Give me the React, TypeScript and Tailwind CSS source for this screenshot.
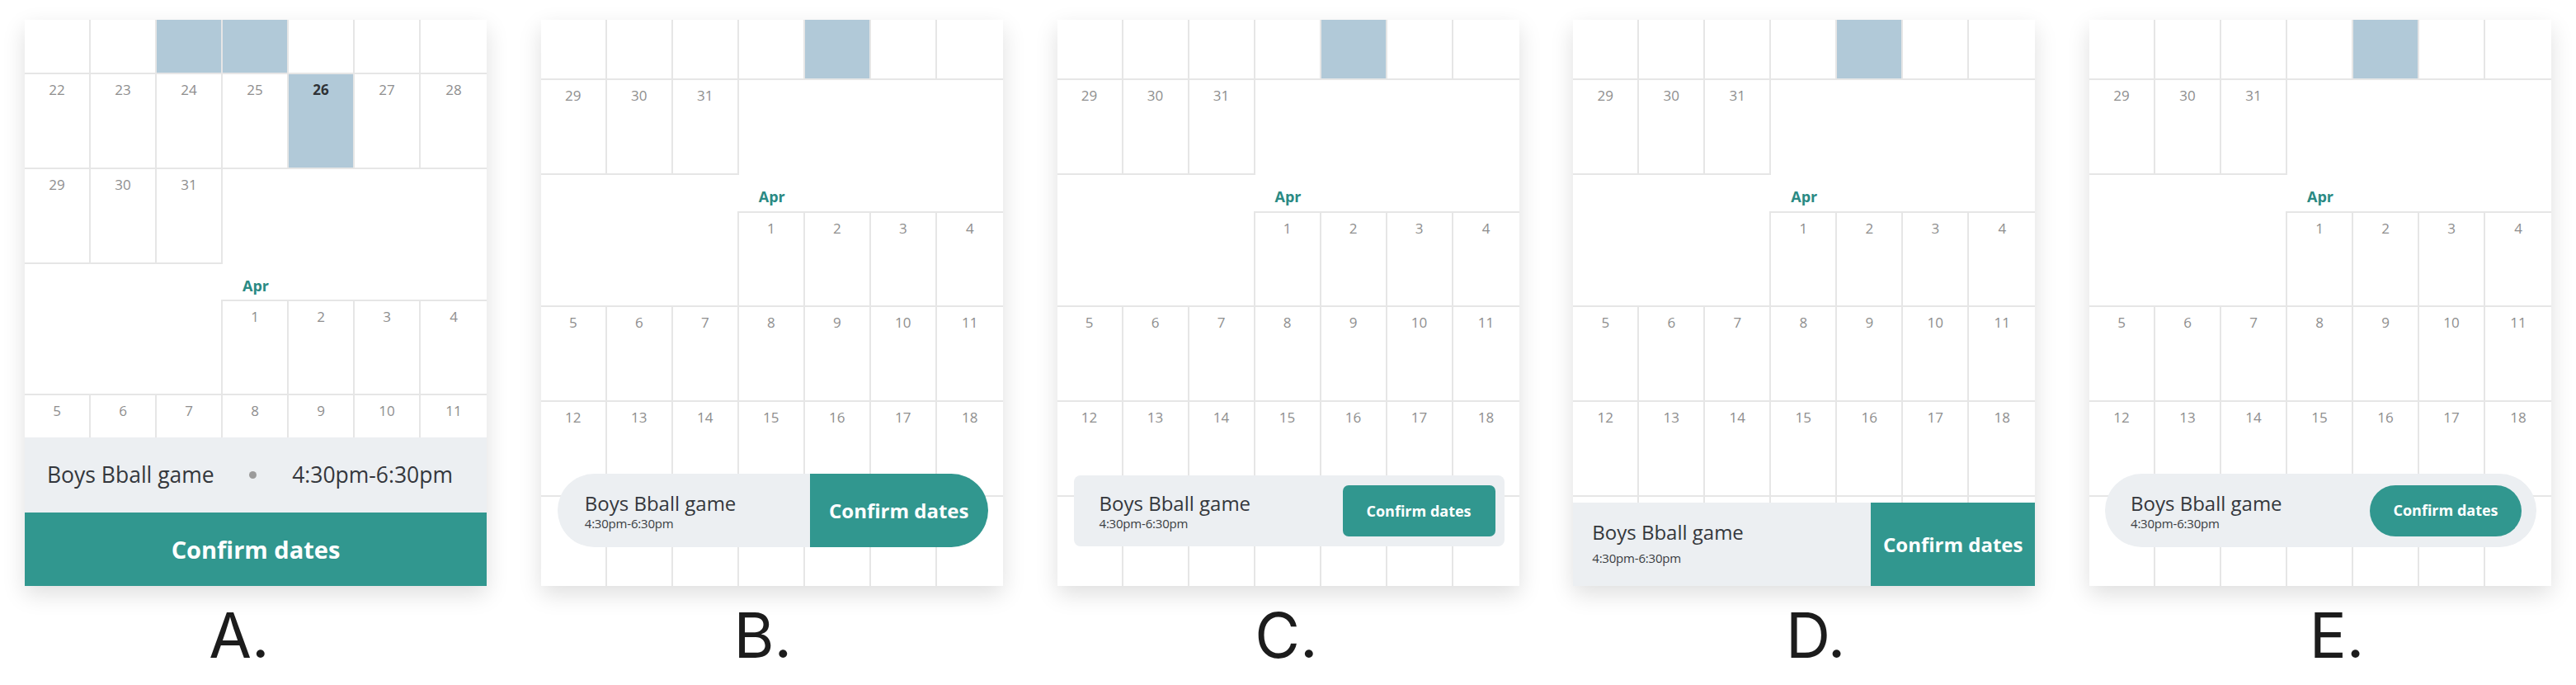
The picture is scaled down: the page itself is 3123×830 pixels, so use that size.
import React from "react";

type Spec = {
  n?: string | number;
  hl?: boolean;
  bold?: boolean;
  r?: boolean;
  b?: boolean;
  t?: boolean;
};

function Cell({ s }: { s: Spec }) {
  const cls = [
    "relative text-center pt-[8px] text-[17px] leading-[22px] border-[#e6e6e6]",
    s.r ? "border-r-2" : "",
    s.b ? "border-b-2" : "",
    s.t ? "border-t-2" : "",
    s.hl ? "bg-[#b1c9d8]" : "",
    s.bold ? "font-bold text-[#2f3236]" : "text-[#8e8e8e]",
  ].join(" ");
  return <div className={cls}>{s.n}</div>;
}

function Row({ h, cells }: { h: number; cells: Spec[] }) {
  return (
    <div className="grid grid-cols-7 shrink-0" style={{ height: h }}>
      {cells.map((c, i) => (
        <Cell key={i} s={c} />
      ))}
    </div>
  );
}

const full = (nums: (number | string | undefined)[], hl: number[] = [], bold: number[] = []): Spec[] =>
  nums.map((n, i) => ({ n, r: i < 6, b: true, hl: hl.includes(i), bold: bold.includes(i) }));

const lastMarch: Spec[] = [
  { n: 29, r: true, b: true },
  { n: 30, r: true, b: true },
  { n: 31, r: true, b: true },
  {},
  {},
  {},
  {},
];

const aprFirst: Spec[] = [
  { b: true },
  { b: true },
  { b: true, r: true },
  { n: 1, t: true, r: true, b: true },
  { n: 2, t: true, r: true, b: true },
  { n: 3, t: true, r: true, b: true },
  { n: 4, t: true, b: true },
];

function AprLabel({ h }: { h: number }) {
  return (
    <div className="grid grid-cols-7 shrink-0" style={{ height: h }}>
      <div />
      <div />
      <div />
      <div className="text-center pt-[14px] leading-[24px] text-[18px] font-bold text-[#2a8a84]">Apr</div>
    </div>
  );
}

const blank = [undefined, undefined, undefined, undefined, undefined, undefined, undefined];

function Panel({ children }: { children: React.ReactNode }) {
  return <div className="flex flex-col items-center">{children}</div>;
}

function Card({ children, overlay }: { children: React.ReactNode; overlay: React.ReactNode }) {
  return (
    <div className="relative w-[560px] h-[686px] bg-white overflow-hidden shadow-[0_10px_26px_rgba(0,0,0,0.13)]">
      <div className="flex flex-col">{children}</div>
      {overlay}
    </div>
  );
}

function Label({ text, cls }: { text: string; cls: string }) {
  return (
    <div
      className={"mt-[22px] text-[75px] leading-none text-[#1c1c1c] " + cls}
      style={{ fontFamily: "Inter, Roboto, 'DejaVu Sans', sans-serif" }}
    >
      {text}
    </div>
  );
}

function CalendarB() {
  return (
    <>
      <Row h={73} cells={full(blank, [4])} />
      <Row h={115} cells={lastMarch} />
      <AprLabel h={44} />
      <Row h={116} cells={aprFirst} />
      <Row h={115} cells={full([5, 6, 7, 8, 9, 10, 11])} />
      <Row h={115} cells={full([12, 13, 14, 15, 16, 17, 18])} />
      <Row h={115} cells={full(blank)} />
    </>
  );
}

function NameBlock() {
  return (
    <div className="flex flex-col">
      <div className="text-[24px] leading-[30px] text-[#34373c]">Boys Bball game</div>
      <div className="text-[15px] leading-[18px] text-[#3a3d42] tracking-[-0.2px]">4:30pm-6:30pm</div>
    </div>
  );
}

export default function App() {
  return (
    <div
      className="w-[3123px] h-[830px] bg-white flex justify-between px-[30px] pt-[24px]"
      style={{ fontFamily: "'Open Sans', 'Noto Sans', sans-serif" }}
    >
      {/* A */}
      <Panel>
        <Card
          overlay={
            <div className="absolute left-0 right-0 bottom-0">
              <div className="h-[91px] bg-[#eceff2] flex items-center justify-between pl-[27px] pr-[41px]">
                <span className="text-[26.5px] text-[#34373c]">Boys Bball game</span>
                <span className="w-[9px] h-[9px] rounded-full bg-[#9b9b9b]" />
                <span className="text-[26.5px] text-[#34373c]">4:30pm-6:30pm</span>
              </div>
              <div className="h-[89px] bg-[#31978f] flex items-center justify-center text-white font-bold text-[29px]">
                Confirm dates
              </div>
            </div>
          }
        >
          <Row h={66} cells={full(blank, [2, 3])} />
          <Row h={115} cells={full([22, 23, 24, 25, 26, 27, 28], [4], [4])} />
          <Row h={115} cells={lastMarch} />
          <AprLabel h={43} />
          <Row h={116} cells={aprFirst} />
          <Row h={115} cells={full([5, 6, 7, 8, 9, 10, 11])} />
          <Row h={115} cells={full(blank)} />
        </Card>
        <Label text="A." cls="-ml-[40px]" />
      </Panel>

      {/* B */}
      <Panel>
        <Card
          overlay={
            <div className="absolute left-[20px] right-[18px] top-[550px] h-[89px] flex rounded-full overflow-hidden">
              <div className="flex-1 bg-[#eceff2] flex items-center pl-[33px]">
                <NameBlock />
              </div>
              <div className="w-[216px] bg-[#31978f] flex items-center justify-center text-white font-bold text-[24px]">
                Confirm dates
              </div>
            </div>
          }
        >
          <CalendarB />
        </Card>
        <Label text="B." cls="-ml-[22px]" />
      </Panel>

      {/* C */}
      <Panel>
        <Card
          overlay={
            <div className="absolute left-[20px] right-[18px] top-[552px] h-[86px] bg-[#eceff2] rounded-[8px] flex items-center justify-between pl-[31px] pr-[11px]">
              <NameBlock />
              <div className="w-[185px] h-[62px] rounded-[7px] bg-[#31978f] flex items-center justify-center text-white font-bold text-[18px]">
                Confirm dates
              </div>
            </div>
          }
        >
          <CalendarB />
        </Card>
        <Label text="C." cls="-ml-[4px]" />
      </Panel>

      {/* D */}
      <Panel>
        <Card
          overlay={
            <div className="absolute left-0 right-0 bottom-0 h-[101px] flex">
              <div className="flex-1 bg-[#eceff2] pl-[23px] pt-[21px]">
                <div className="text-[24px] leading-[30px] text-[#34373c]">Boys Bball game</div>
                <div className="mt-[7px] text-[15px] leading-[18px] text-[#3a3d42] tracking-[-0.2px]">4:30pm-6:30pm</div>
              </div>
              <div className="w-[199px] bg-[#31978f] flex items-center justify-center text-white font-bold text-[24px]">
                Confirm dates
              </div>
            </div>
          }
        >
          <CalendarB />
        </Card>
        <Label text="D." cls="ml-[28px]" />
      </Panel>

      {/* E */}
      <Panel>
        <Card
          overlay={
            <div className="absolute left-[19px] right-[18px] top-[550px] h-[89px] bg-[#eceff2] rounded-full flex items-center justify-between pl-[31px] pr-[18px]">
              <NameBlock />
              <div className="w-[184px] h-[62px] rounded-full bg-[#31978f] flex items-center justify-center text-white font-bold text-[18px]">
                Confirm dates
              </div>
            </div>
          }
        >
          <CalendarB />
        </Card>
        <Label text="E." cls="ml-[40px]" />
      </Panel>
    </div>
  );
}
